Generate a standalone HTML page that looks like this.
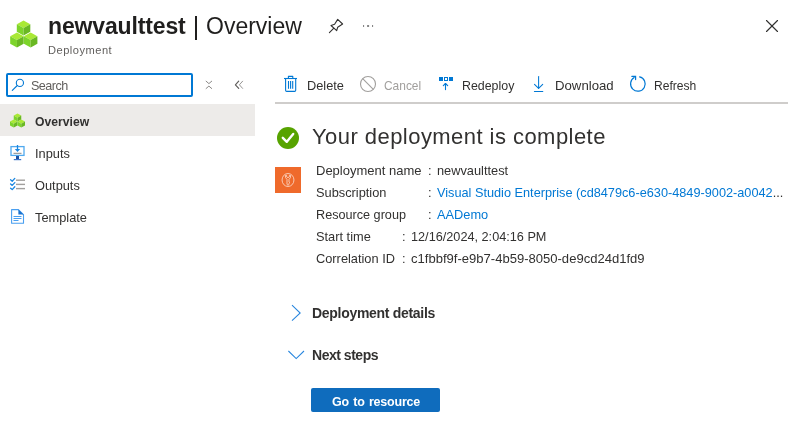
<!DOCTYPE html>
<html><head><meta charset="utf-8"><title>newvaulttest | Overview</title>
<style>
html,body{margin:0;padding:0;background:#fff;width:798px;height:437px;overflow:hidden;position:relative}
body{font-family:"Liberation Sans",sans-serif}
.ab{position:absolute;box-sizing:content-box}
.t{position:absolute;line-height:normal;white-space:nowrap;will-change:transform}
</style></head><body>
<svg class="ab" style="left:0;top:0" width="798" height="110" viewBox="0 0 798 110">
<g transform="translate(16.8,20.6)"><polygon points="0,3.75 6.75,0 13.5,3.75 6.75,7.5" fill="#a9e935"/><polygon points="0,3.75 6.75,7.5 6.75,15 0,11.25" fill="#7dd42a"/><polygon points="6.75,7.5 13.5,3.75 13.5,11.25 6.75,15" fill="#6ab823"/></g>
<g transform="translate(10.2,32.6)"><polygon points="0,3.75 6.75,0 13.5,3.75 6.75,7.5" fill="#a9e935"/><polygon points="0,3.75 6.75,7.5 6.75,15 0,11.25" fill="#7dd42a"/><polygon points="6.75,7.5 13.5,3.75 13.5,11.25 6.75,15" fill="#6ab823"/></g>
<g transform="translate(23.9,32.6)"><polygon points="0,3.75 6.75,0 13.5,3.75 6.75,7.5" fill="#a9e935"/><polygon points="0,3.75 6.75,7.5 6.75,15 0,11.25" fill="#7dd42a"/><polygon points="6.75,7.5 13.5,3.75 13.5,11.25 6.75,15" fill="#6ab823"/></g>
<!-- pin -->
<g fill="none" stroke="#323130" stroke-width="1.1" stroke-linejoin="round" stroke-linecap="round">
 <polygon points="331,25.5 334.6,24.3 337.7,19.4 342.6,24 337.7,27.2 336.7,30.6"/>
 <line x1="329.4" y1="32.6" x2="333.6" y2="28.4"/>
</g>
<g fill="#878787"><rect x="363" y="25" width="1.1" height="2"/><rect x="367.1" y="25" width="2" height="2"/><rect x="372" y="25" width="1.1" height="2"/></g>
<!-- close -->
<g stroke="#323130" stroke-width="1.15" stroke-linecap="round"><line x1="766.5" y1="20.5" x2="777.5" y2="31.5"/><line x1="777.5" y1="20.5" x2="766.5" y2="31.5"/></g>
<!-- search icon -->
<g fill="none" stroke="#0078d4" stroke-width="1.1" stroke-linecap="round"><circle cx="19.9" cy="82.9" r="3.6"/><line x1="12.3" y1="90.4" x2="17.3" y2="85.5"/></g>
<!-- collapse icon -->
<g fill="none" stroke="#8a8886" stroke-width="1" stroke-linecap="round" stroke-linejoin="round">
<polyline points="206.1,81.2 208.9,83.6 211.7,81.2"/><polyline points="206.1,88.5 208.9,86.1 211.7,88.5"/>
</g>
<g fill="none" stroke-linecap="round" stroke-linejoin="round">
<polyline points="238.7,81.2 235.4,84.8 238.7,88.4" stroke="#605e5c" stroke-width="1.2"/>
<polyline points="242.6,81.2 239.4,84.8 242.6,88.4" stroke="#8a8886" stroke-width="0.9"/>
</g>
<!-- toolbar underline -->
<rect x="275" y="102" width="513" height="2" fill="#cfcdcb"/>
<!-- trash -->
<g fill="none" stroke="#0078d4" stroke-width="1.1" stroke-linejoin="round">
<line x1="284" y1="78.5" x2="297" y2="78.5"/>
<rect x="288.4" y="76.4" width="4.4" height="2.1"/>
<path d="M285.6,78.5 V90.3 Q285.6,91.4 286.7,91.4 H294.6 Q295.7,91.4 295.7,90.3 V78.5"/>
<line x1="288.5" y1="81" x2="288.5" y2="88.8"/><line x1="290.6" y1="81" x2="290.6" y2="88.8"/><line x1="292.7" y1="81" x2="292.7" y2="88.8"/>
</g>
<!-- cancel -->
<g fill="none" stroke="#a19f9d" stroke-width="1.1"><circle cx="368" cy="84" r="7.5"/><line x1="362.7" y1="78.7" x2="373.3" y2="89.3"/></g>
<!-- redeploy -->
<g fill="#0078d4"><rect x="439" y="77" width="4" height="4"/><rect x="449" y="77" width="4" height="4"/></g>
<rect x="444.5" y="77.5" width="3" height="3" fill="none" stroke="#0078d4" stroke-width="1"/>
<g fill="none" stroke="#0078d4" stroke-width="1.1" stroke-linecap="round" stroke-linejoin="round"><line x1="445.5" y1="83.6" x2="445.5" y2="89.6"/><polyline points="443.3,85.7 445.5,83.5 447.7,85.7"/></g>
<!-- download -->
<g fill="none" stroke="#0078d4" stroke-width="1.05" stroke-linecap="round" stroke-linejoin="round">
<line x1="538.6" y1="76.4" x2="538.6" y2="88.2"/><polyline points="534.5,84.3 538.6,88.4 542.7,84.3"/>
<line x1="534.4" y1="91.4" x2="542.8" y2="91.4"/>
</g>
<!-- refresh -->
<g fill="none" stroke="#0078d4" stroke-width="1.2" stroke-linecap="round" stroke-linejoin="miter">
<path d="M639.6,76.8 A7.3,7.3 0 1 1 634.2,77.6"/>
<polyline points="631.8,76.3 635.6,76.3 635.6,79.6"/>
</g>
</svg>
<div class="t" style="left:48.00px;top:13px;font-size:23px;color:#201f1e;font-weight:bold;letter-spacing:-0.14px;">newvaulttest</div>
<div class="t" style="left:205.60px;top:13px;font-size:23px;color:#201f1e;font-weight:normal;">Overview</div>
<div class="ab" style="left:195.4px;top:15.5px;width:1.8px;height:24px;background:#201f1e"></div>
<div class="t" style="left:48.00px;top:44px;font-size:11.1px;color:#605e5c;font-weight:normal;letter-spacing:0.5px;">Deployment</div>
<div class="ab" style="left:6px;top:73px;width:183px;height:19.5px;border:2px solid #0078d4;border-radius:2px"></div>
<div class="t" style="left:31.00px;top:79px;font-size:12.6px;color:#605e5c;font-weight:normal;letter-spacing:-0.55px;">Search</div>
<div class="t" style="left:307.10px;top:78px;font-size:12.8px;color:#323130;font-weight:normal;">Delete</div>
<div class="t" style="left:384.10px;top:79px;font-size:11.95px;color:#a19f9d;font-weight:normal;">Cancel</div>
<div class="t" style="left:462.30px;top:79px;font-size:12.4px;color:#323130;font-weight:normal;">Redeploy</div>
<div class="t" style="left:555.20px;top:78px;font-size:13.2px;color:#323130;font-weight:normal;">Download</div>
<div class="t" style="left:654.00px;top:79px;font-size:12.1px;color:#323130;font-weight:normal;">Refresh</div>
<div class="ab" style="left:0;top:104px;width:255px;height:32px;background:#edebe9"></div>
<svg class="ab" style="left:0;top:104px" width="40" height="130" viewBox="0 104 40 130">
<g transform="translate(10,112)">
 <g transform="translate(3.75,0)"><polygon points="0,3.6 3.75,1.5 7.5,3.6 3.75,5.7" fill="#a9e935"/><polygon points="0,3.6 3.75,5.7 3.75,9.6 0,7.5" fill="#7dd42a"/><polygon points="3.75,5.7 7.5,3.6 7.5,7.5 3.75,9.6" fill="#6ab823"/></g>
 <g transform="translate(0,6)"><polygon points="0,3.6 3.75,1.5 7.5,3.6 3.75,5.7" fill="#a9e935"/><polygon points="0,3.6 3.75,5.7 3.75,9.6 0,7.5" fill="#7dd42a"/><polygon points="3.75,5.7 7.5,3.6 7.5,7.5 3.75,9.6" fill="#6ab823"/></g>
 <g transform="translate(7.5,6)"><polygon points="0,3.6 3.75,1.5 7.5,3.6 3.75,5.7" fill="#a9e935"/><polygon points="0,3.6 3.75,5.7 3.75,9.6 0,7.5" fill="#7dd42a"/><polygon points="3.75,5.7 7.5,3.6 7.5,7.5 3.75,9.6" fill="#6ab823"/></g>
</g>
<!-- inputs -->
<rect x="11" y="146.6" width="13" height="8.8" fill="#fff" stroke="#50a9ee" stroke-width="1.3"/>
<line x1="17.5" y1="145" x2="17.5" y2="149.5" stroke="#1b87e0" stroke-width="1.3"/>
<polygon points="14.8,149 20.2,149 17.5,152" fill="#1b87e0"/>
<line x1="13.5" y1="153.3" x2="21.5" y2="153.3" stroke="#8a8886" stroke-width="1"/>
<rect x="16" y="156" width="3" height="3.2" fill="#1d4fa0"/>
<rect x="13.8" y="159" width="7.4" height="1.2" fill="#3b74c8"/>
<!-- outputs -->
<g fill="none" stroke="#1b87e0" stroke-width="1.3" stroke-linecap="round" stroke-linejoin="round">
<polyline points="10.6,179.8 12.2,181.2 14.8,178.4"/>
<polyline points="10.6,184 12.2,185.4 14.8,182.6"/>
<polyline points="10.6,188.2 12.2,189.6 14.8,186.8"/>
</g>
<g fill="#a19f9d"><rect x="16" y="179.5" width="9" height="1.4"/><rect x="16" y="183.7" width="9" height="1.4"/><rect x="16" y="187.9" width="9" height="1.4"/></g>
<!-- template -->
<path d="M11.6,209.6 H18.4 L23.5,214.6 V223.3 H11.6 Z" fill="#fff" stroke="#4a9ff0" stroke-width="1.1" stroke-linejoin="round"/>
<path d="M18.4,209.6 L23.5,214.6 H18.4 Z" fill="#1a73d0"/>
<g stroke="#4a9ff0" stroke-width="1"><line x1="13.5" y1="216.5" x2="21.5" y2="216.5"/><line x1="13.5" y1="218.5" x2="21.5" y2="218.5"/><line x1="13.5" y1="220.5" x2="18.5" y2="220.5"/></g>
</svg>
<div class="t" style="left:35.00px;top:115px;font-size:12.2px;color:#323130;font-weight:bold;">Overview</div>
<div class="t" style="left:35.00px;top:146px;font-size:12.8px;color:#323130;font-weight:normal;">Inputs</div>
<div class="t" style="left:35.00px;top:178px;font-size:12.8px;color:#323130;font-weight:normal;">Outputs</div>
<div class="t" style="left:35.00px;top:210px;font-size:12.8px;color:#323130;font-weight:normal;">Template</div>
<svg class="ab" style="left:270px;top:120px" width="60" height="250" viewBox="270 120 60 250">
<circle cx="288" cy="138" r="11" fill="#57a300"/>
<polyline points="282.8,137.8 286.8,141.8 293.2,134" fill="none" stroke="#fff" stroke-width="2.4" stroke-linecap="round" stroke-linejoin="round"/>
<rect x="275" y="167" width="26" height="26" fill="#ef6a2b"/>
<g fill="none" stroke="#fbe0d2" stroke-width="0.8" stroke-linejoin="round">
<ellipse cx="288" cy="180" rx="5.95" ry="6.5"/>
<path d="M285.5,175.3 V177.6 L287,179.4 V184.4 L288,185.3 L289,184.4 V183.2 L289.7,182.6 L289,182 V179.4 L290.5,177.6 V175.3 H289.4 V176.8 L288,177.7 L286.6,176.8 V175.3 Z"/>
</g>
<polyline points="292,305.2 300.2,313 292,320.6" fill="none" stroke="#2886de" stroke-width="1.05"/>
<polyline points="288.4,351 296.2,358.6 304,351" fill="none" stroke="#2886de" stroke-width="1.05"/>
</svg>
<div class="t" style="left:312.00px;top:124px;font-size:22px;color:#323130;font-weight:normal;letter-spacing:0.45px;">Your deployment is complete</div>
<div class="t" style="left:316.00px;top:163px;font-size:13.0px;color:#323130;font-weight:normal;">Deployment name</div>
<div class="t" style="left:316.00px;top:185px;font-size:12.8px;color:#323130;font-weight:normal;">Subscription</div>
<div class="t" style="left:316.00px;top:208px;font-size:12.65px;color:#323130;font-weight:normal;">Resource group</div>
<div class="t" style="left:316.00px;top:229px;font-size:12.8px;color:#323130;font-weight:normal;">Start time</div>
<div class="t" style="left:316.00px;top:251px;font-size:12.8px;color:#323130;font-weight:normal;">Correlation ID</div>
<div class="t" style="left:428.00px;top:163px;font-size:12.8px;color:#323130;font-weight:normal;">:</div>
<div class="t" style="left:428.00px;top:185px;font-size:12.8px;color:#323130;font-weight:normal;">:</div>
<div class="t" style="left:428.00px;top:207px;font-size:12.8px;color:#323130;font-weight:normal;">:</div>
<div class="t" style="left:402.00px;top:229px;font-size:12.8px;color:#323130;font-weight:normal;">:</div>
<div class="t" style="left:402.00px;top:251px;font-size:12.8px;color:#323130;font-weight:normal;">:</div>
<div class="t" style="left:436.50px;top:163px;font-size:12.8px;color:#323130;font-weight:normal;">newvaulttest</div>
<div class="t" style="left:436.50px;top:185px;font-size:12.72px;color:#323130;font-weight:normal;"><span style="color:#0078d4">Visual Studio Enterprise (cd8479c6-e630-4849-9002-a0042</span>...</div>
<div class="t" style="left:436.50px;top:207px;font-size:12.8px;color:#0078d4;font-weight:normal;">AADemo</div>
<div class="t" style="left:410.50px;top:230px;font-size:12.7px;color:#323130;font-weight:normal;">12/16/2024, 2:04:16 PM</div>
<div class="t" style="left:410.50px;top:251px;font-size:13.05px;color:#323130;font-weight:normal;">c1fbbf9f-e9b7-4b59-8050-de9cd24d1fd9</div>
<div class="t" style="left:312.00px;top:305px;font-size:14px;color:#323130;font-weight:bold;letter-spacing:-0.3px;">Deployment details</div>
<div class="t" style="left:312.00px;top:347px;font-size:14px;color:#323130;font-weight:bold;letter-spacing:-0.48px;">Next steps</div>
<div class="ab" style="left:311px;top:388px;width:129px;height:24px;background:#0f6cbd;border-radius:2px"></div>
<div class="t" style="left:332.00px;top:395px;font-size:12.5px;color:#ffffff;font-weight:bold;letter-spacing:-0.2px;word-spacing:1px;">Go to resource</div>
</body></html>
